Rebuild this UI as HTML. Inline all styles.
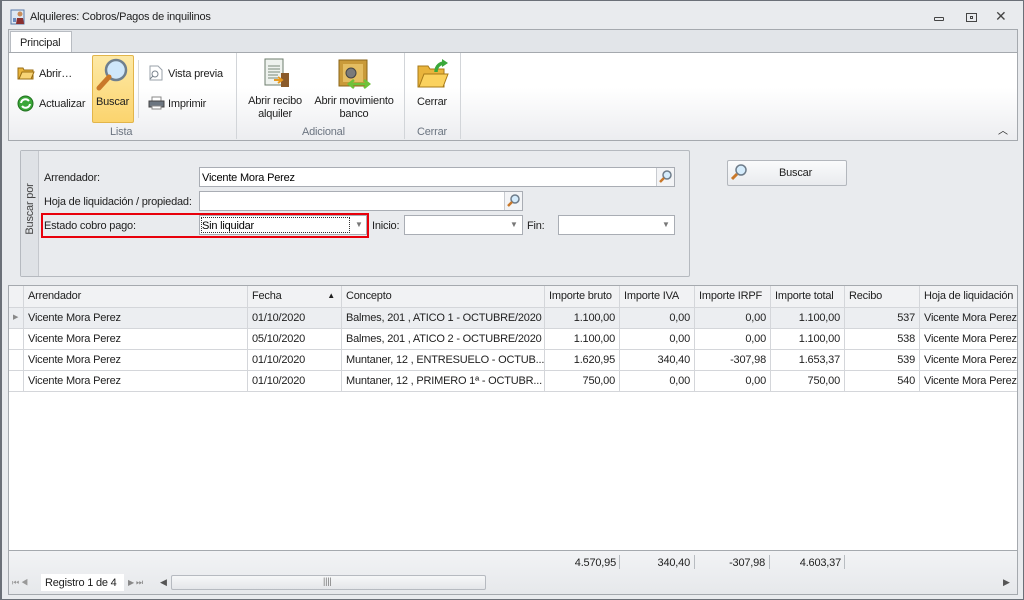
<!DOCTYPE html>
<html><head><meta charset="utf-8"><style>
*{box-sizing:border-box;margin:0;padding:0}
body{width:1024px;height:600px;overflow:hidden;font-family:"Liberation Sans",sans-serif;font-size:11px;letter-spacing:-0.2px;color:#1e1e1e;background:#e9ebee;position:relative}
.a{position:absolute}
.t{white-space:nowrap}
.grid .c{position:absolute;top:0;height:21px;line-height:20px;padding:0 4px;border-right:1px solid #d4d6da;border-bottom:1px solid #d4d6da;overflow:hidden;white-space:nowrap}
.r{text-align:right}
.inp{background:#fff;border:1px solid #a9adb4}
</style></head><body>
<div class="a" style="left:0;top:0;width:1024px;height:600px;border:1px solid #6b7078;border-left:2px solid #6b7078"></div>
<svg class="a" style="left:10px;top:9px" width="16" height="16"><rect x="1" y="1" width="13" height="14" fill="#dfe8f3" stroke="#5a7aa8"/><rect x="3" y="9" width="3" height="4" fill="#6a8cc0"/><circle cx="10" cy="5" r="2.5" fill="#c98c5a"/><path d="M6 15 L7 9 L13 9 L14 15Z" fill="#8a2f2f"/></svg>
<div class="a t" style="left:30px;top:11px">Alquileres: Cobros/Pagos de inquilinos</div>
<div class="a" style="left:934px;top:17px;width:10px;height:4px;border:1px solid #444;border-radius:1px"></div>
<div class="a" style="left:966px;top:13px;width:11px;height:9px;border:1px solid #444"><div style="margin:2px 3px;width:3px;height:3px;border:1px solid #444"></div></div>
<div class="a" style="left:995px;top:8px;font-size:14px;color:#444">✕</div>
<div class="a" style="left:8px;top:29px;width:1010px;height:23px;background:#e2e5e9;border:1px solid #a5a9ae;border-bottom:none"></div>
<div class="a" style="left:10px;top:31px;width:62px;height:22px;background:#fff;border:1px solid #b8bcc2;border-bottom:none"></div>
<div class="a t" style="left:20px;top:37px">Principal</div>
<div class="a" style="left:8px;top:52px;width:1010px;height:89px;background:linear-gradient(#fff,#fff 40%,#ecedf0);border:1px solid #a5a9ae"></div>
<div class="a" style="left:236px;top:53px;width:1px;height:86px;background:#d2d5d9"></div>
<div class="a" style="left:404px;top:53px;width:1px;height:86px;background:#d2d5d9"></div>
<div class="a" style="left:460px;top:53px;width:1px;height:86px;background:#d2d5d9"></div>
<div class="a" style="left:138px;top:60px;width:1px;height:58px;background:#d8dadd"></div>
<svg class="a" style="left:17px;top:66px" width="18" height="14"><path d="M1 2h5l1 2h9v9H1z" fill="#e9b43c" stroke="#9a6e14"/><path d="M2 13l3-7h12l-3 7z" fill="#f8d476" stroke="#9a6e14"/></svg>
<div class="a t" style="left:39px;top:68px">Abrir…</div>
<svg class="a" style="left:17px;top:95px" width="17" height="17"><circle cx="8.5" cy="8.5" r="7.5" fill="#3aa638" stroke="#1f6e1e"/><path d="M4 8a4.5 4.5 0 0 1 8-2M13 9a4.5 4.5 0 0 1-8 2" stroke="#fff" stroke-width="2" fill="none"/></svg>
<div class="a t" style="left:39px;top:98px">Actualizar</div>
<div class="a" style="left:92px;top:55px;width:42px;height:68px;background:linear-gradient(#fde9a6,#fbd46e);border:1px solid #e2b54a;border-radius:2px"></div>
<svg class="a" style="left:96px;top:57px" width="34" height="34"><circle cx="20" cy="13" r="10" fill="#cfe7fb" stroke="#6f7f8e" stroke-width="2.5"/><path d="M13 20L3 31" stroke="#c9782a" stroke-width="5" stroke-linecap="round"/></svg>
<div class="a t" style="left:96px;top:96px">Buscar</div>
<svg class="a" style="left:148px;top:65px" width="15" height="16"><path d="M2 1h8l4 4v10H2z" fill="#fff" stroke="#9aa2aa"/><circle cx="7" cy="9" r="3" fill="none" stroke="#7a848e"/><path d="M5 11l-3 3" stroke="#7a848e"/></svg>
<div class="a t" style="left:168px;top:68px">Vista previa</div>
<svg class="a" style="left:148px;top:96px" width="17" height="14"><rect x="4" y="1" width="9" height="5" fill="#fff" stroke="#888"/><rect x="1" y="5" width="15" height="6" fill="#6b7580" stroke="#444"/><rect x="4" y="10" width="9" height="3" fill="#fff" stroke="#888"/></svg>
<div class="a t" style="left:168px;top:98px">Imprimir</div>
<div class="a t" style="left:110px;top:126px;color:#6b7480">Lista</div>
<svg class="a" style="left:262px;top:58px" width="30" height="32"><rect x="3" y="1" width="18" height="26" fill="#eef2ee" stroke="#6d7d6d"/><path d="M6 8h12M6 11h12M6 14h12M6 17h10M6 20h10" stroke="#7b8a7b"/><rect x="19" y="15" width="8" height="14" fill="#8a5a2a"/><path d="M12 22h8M16 19l4 3-4 3" stroke="#e89a20" stroke-width="2" fill="none"/></svg>
<div class="a t" style="left:244px;top:95px;width:62px;text-align:center;line-height:13px">Abrir recibo<br>alquiler</div>
<svg class="a" style="left:336px;top:58px" width="36" height="32"><rect x="3" y="2" width="28" height="26" fill="#c99a3a" stroke="#8a6418"/><rect x="7" y="6" width="20" height="18" fill="#e4bd62"/><circle cx="15" cy="15" r="5" fill="#7a7a7a" stroke="#444"/><path d="M14 26h18M18 22l-5 4 5 4M28 22l5 4-5 4" stroke="#6fc23a" stroke-width="2.5" fill="none"/></svg>
<div class="a t" style="left:310px;top:95px;width:88px;text-align:center;line-height:13px">Abrir movimiento<br>banco</div>
<div class="a t" style="left:302px;top:126px;color:#6b7480">Adicional</div>
<svg class="a" style="left:416px;top:58px" width="34" height="32"><path d="M2 8h10l2 3h14v18H2z" fill="#e9b43c" stroke="#a77a18"/><path d="M3 29l5-13h24l-5 13z" fill="#fbd25e" stroke="#a77a18"/><path d="M20 14c0-6 4-9 9-9" stroke="#3aa83a" stroke-width="3.5" fill="none"/><path d="M26 1l6 4-6 4z" fill="#3aa83a"/></svg>
<div class="a t" style="left:417px;top:96px">Cerrar</div>
<div class="a t" style="left:417px;top:126px;color:#6b7480">Cerrar</div>
<div class="a t" style="left:998px;top:122px;font-size:10px">︿</div>
<div class="a" style="left:20px;top:150px;width:670px;height:127px;border:1px solid #b5b9bf;border-radius:2px;background:#e9ebee"></div>
<div class="a" style="left:21px;top:151px;width:18px;height:125px;background:#dfe2e6;border-right:1px solid #c5c8cd"></div>
<div class="a t" style="left:-3px;top:203px;transform:rotate(-90deg);color:#444;width:66px;text-align:center">Buscar por</div>
<div class="a t" style="left:44px;top:172px">Arrendador:</div>
<div class="a inp" style="left:199px;top:167px;width:476px;height:20px"></div>
<div class="a t" style="left:202px;top:172px;color:#000">Vicente Mora Perez</div>
<div class="a" style="left:656px;top:168px;width:18px;height:18px;background:#f3f4f6;border-left:1px solid #c8cbd0"></div>
<svg class="a" style="left:658px;top:169px" width="15" height="15"><circle cx="9" cy="6" r="4" fill="#d5ecfc" stroke="#6e7c8a" stroke-width="1.5"/><path d="M6 9l-4 4" stroke="#c9782a" stroke-width="2.5"/></svg>
<div class="a t" style="left:44px;top:196px">Hoja de liquidación / propiedad:</div>
<div class="a inp" style="left:199px;top:191px;width:324px;height:20px"></div>
<div class="a" style="left:504px;top:192px;width:18px;height:18px;background:#f3f4f6;border-left:1px solid #c8cbd0"></div>
<svg class="a" style="left:506px;top:193px" width="15" height="15"><circle cx="9" cy="6" r="4" fill="#d5ecfc" stroke="#6e7c8a" stroke-width="1.5"/><path d="M6 9l-4 4" stroke="#c9782a" stroke-width="2.5"/></svg>
<div class="a" style="left:41px;top:213px;width:328px;height:25px;border:2px solid #e8000b"></div>
<div class="a t" style="left:44px;top:220px">Estado cobro pago:</div>
<div class="a inp" style="left:199px;top:215px;width:168px;height:20px"></div>
<div class="a" style="left:201px;top:217px;width:149px;height:16px;border:1px dotted #333"></div>
<div class="a t" style="left:202px;top:220px;color:#000">Sin liquidar</div>
<div class="a t" style="left:355px;top:220px;font-size:8px;color:#777">▼</div>
<div class="a t" style="left:372px;top:220px">Inicio:</div>
<div class="a inp" style="left:404px;top:215px;width:119px;height:20px"></div>
<div class="a t" style="left:510px;top:220px;font-size:8px;color:#777">▼</div>
<div class="a t" style="left:527px;top:220px">Fin:</div>
<div class="a inp" style="left:558px;top:215px;width:117px;height:20px"></div>
<div class="a t" style="left:662px;top:220px;font-size:8px;color:#777">▼</div>
<div class="a" style="left:727px;top:160px;width:120px;height:26px;border:1px solid #b3b7bd;border-radius:2px;background:linear-gradient(#fafbfc,#e9ebee)"></div>
<svg class="a" style="left:730px;top:163px" width="18" height="18"><circle cx="11" cy="7" r="5" fill="#d5ecfc" stroke="#6e7c8a" stroke-width="1.5"/><path d="M7 11l-5 5" stroke="#c9782a" stroke-width="3"/></svg>
<div class="a t" style="left:779px;top:167px">Buscar</div>
<div class="a" style="left:8px;top:285px;width:1010px;height:310px;background:#fff;border:1px solid #a5a9ae"></div>
<div class="a grid" style="left:9px;top:286px;width:1008px;height:22px;background:#f1f2f4">
<div class="c" style="left:0;width:15px;height:22px"></div>
<div class="c" style="left:15px;width:224px;height:22px">Arrendador</div>
<div class="c" style="left:239px;width:94px;height:22px">Fecha<span style="position:absolute;right:6px;font-size:8px">▲</span></div>
<div class="c" style="left:333px;width:203px;height:22px">Concepto</div>
<div class="c" style="left:536px;width:75px;height:22px">Importe bruto</div>
<div class="c" style="left:611px;width:75px;height:22px">Importe IVA</div>
<div class="c" style="left:686px;width:76px;height:22px">Importe IRPF</div>
<div class="c" style="left:762px;width:74px;height:22px">Importe total</div>
<div class="c" style="left:836px;width:75px;height:22px">Recibo</div>
<div class="c" style="left:911px;width:97px;height:22px;border-right:none">Hoja de liquidación</div>
</div>
<div class="a grid" style="left:9px;top:308px;width:1008px;height:21px;background:#eceef1">
<div class="c" style="left:0;width:15px;font-size:7px;color:#888;padding:0 4px">▶</div>
<div class="c" style="left:15px;width:224px">Vicente Mora Perez</div><div class="c" style="left:239px;width:94px">01/10/2020</div><div class="c" style="left:333px;width:203px">Balmes, 201 , ATICO 1 - OCTUBRE/2020</div><div class="c r" style="left:536px;width:75px">1.100,00</div><div class="c r" style="left:611px;width:75px">0,00</div><div class="c r" style="left:686px;width:76px">0,00</div><div class="c r" style="left:762px;width:74px">1.100,00</div><div class="c r" style="left:836px;width:75px">537</div><div class="c" style="left:911px;width:97px;border-right:none">Vicente Mora Perez</div></div>
<div class="a grid" style="left:9px;top:329px;width:1008px;height:21px">
<div class="c" style="left:0;width:15px"></div>
<div class="c" style="left:15px;width:224px">Vicente Mora Perez</div><div class="c" style="left:239px;width:94px">05/10/2020</div><div class="c" style="left:333px;width:203px">Balmes, 201 , ATICO 2 - OCTUBRE/2020</div><div class="c r" style="left:536px;width:75px">1.100,00</div><div class="c r" style="left:611px;width:75px">0,00</div><div class="c r" style="left:686px;width:76px">0,00</div><div class="c r" style="left:762px;width:74px">1.100,00</div><div class="c r" style="left:836px;width:75px">538</div><div class="c" style="left:911px;width:97px;border-right:none">Vicente Mora Perez</div></div>
<div class="a grid" style="left:9px;top:350px;width:1008px;height:21px">
<div class="c" style="left:0;width:15px"></div>
<div class="c" style="left:15px;width:224px">Vicente Mora Perez</div><div class="c" style="left:239px;width:94px">01/10/2020</div><div class="c" style="left:333px;width:203px">Muntaner, 12 , ENTRESUELO - OCTUB...</div><div class="c r" style="left:536px;width:75px">1.620,95</div><div class="c r" style="left:611px;width:75px">340,40</div><div class="c r" style="left:686px;width:76px">-307,98</div><div class="c r" style="left:762px;width:74px">1.653,37</div><div class="c r" style="left:836px;width:75px">539</div><div class="c" style="left:911px;width:97px;border-right:none">Vicente Mora Perez</div></div>
<div class="a grid" style="left:9px;top:371px;width:1008px;height:21px">
<div class="c" style="left:0;width:15px"></div>
<div class="c" style="left:15px;width:224px">Vicente Mora Perez</div><div class="c" style="left:239px;width:94px">01/10/2020</div><div class="c" style="left:333px;width:203px">Muntaner, 12 , PRIMERO 1ª - OCTUBR...</div><div class="c r" style="left:536px;width:75px">750,00</div><div class="c r" style="left:611px;width:75px">0,00</div><div class="c r" style="left:686px;width:76px">0,00</div><div class="c r" style="left:762px;width:74px">750,00</div><div class="c r" style="left:836px;width:75px">540</div><div class="c" style="left:911px;width:97px;border-right:none">Vicente Mora Perez</div></div>
<div class="a" style="left:9px;top:550px;width:1008px;height:44px;background:linear-gradient(#f2f3f5,#e6e8eb);border-top:1px solid #a5a9ae"></div>
<div class="a t r" style="left:545px;top:557px;width:71px">4.570,95</div>
<div class="a t r" style="left:620px;top:557px;width:70px">340,40</div>
<div class="a t r" style="left:695px;top:557px;width:70px">-307,98</div>
<div class="a t r" style="left:771px;top:557px;width:70px">4.603,37</div>
<div class="a" style="left:619px;top:555px;width:1px;height:14px;background:#b8bcc1"></div>
<div class="a" style="left:694px;top:555px;width:1px;height:14px;background:#b8bcc1"></div>
<div class="a" style="left:769px;top:555px;width:1px;height:14px;background:#b8bcc1"></div>
<div class="a" style="left:844px;top:555px;width:1px;height:14px;background:#b8bcc1"></div>
<div class="a t" style="left:12px;top:578px;font-size:8px;color:#999">⏮ ◀</div>
<div class="a" style="left:41px;top:574px;width:83px;height:17px;background:#fff"></div>
<div class="a t" style="left:45px;top:577px">Registro 1 de 4</div>
<div class="a t" style="left:128px;top:578px;font-size:8px;color:#888">▶ ⏭</div>
<div class="a t" style="left:160px;top:577px;font-size:9px;color:#555">◀</div>
<div class="a" style="left:171px;top:575px;width:315px;height:15px;border:1px solid #b6bac0;border-radius:2px;background:linear-gradient(#f6f7f8,#e4e6e9)"></div>
<div class="a t" style="left:323px;top:576px;font-size:9px;color:#777">||||</div>
<div class="a t" style="left:1003px;top:577px;font-size:9px;color:#555">▶</div>
</body></html>
